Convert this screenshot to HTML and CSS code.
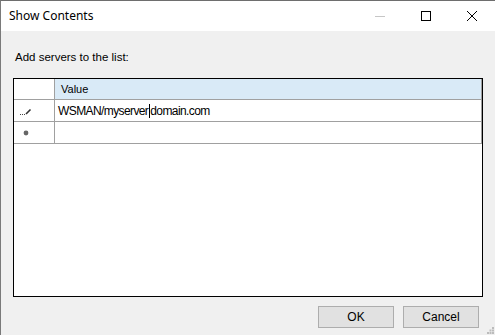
FILE: index.html
```html
<!DOCTYPE html>
<html lang="en">
<head>
    <meta charset="UTF-8">
    <title>Show Contents</title>
    <link rel="stylesheet" href="styles.css">
</head>
<body>
    <div class="window">
        <div class="titlebar">
            <span class="title">Show Contents</span>
            <div class="caption-buttons">
                <div class="cap-btn">
                    <svg width="12" height="12" viewBox="0 0 12 12"><path d="M1 6.5h10" stroke="#c6c6c6" stroke-width="1" fill="none"/></svg>
                </div>
                <div class="cap-btn">
                    <svg width="12" height="12" viewBox="0 0 12 12"><rect x="1.5" y="1.5" width="9" height="9" stroke="#000" stroke-width="1" fill="none"/></svg>
                </div>
                <div class="cap-btn">
                    <svg width="12" height="12" viewBox="0 0 12 12"><path d="M1 1l10 10M11 1L1 11" stroke="#000" stroke-width="1" fill="none"/></svg>
                </div>
            </div>
        </div>
        <div class="content">
            <div class="label">Add servers to the list:</div>
            <div class="grid">
                <div class="row head">
                    <div class="row-header"></div>
                    <div class="cell">Value</div>
                </div>
                <div class="row">
                    <div class="row-header">
                        <span class="row-icon">
                            <svg width="12" height="8" viewBox="0 0 12 8"><path d="M0 7.5h1M2 7.5h1M4 7.5h1" stroke="#444" stroke-width="1"/><path d="M6 7l4.5-4.5" stroke="#333" stroke-width="1.6"/></svg>
                        </span>
                    </div>
                    <div class="cell editing">WSMAN/myserver<span class="caret"></span>domain.com</div>
                </div>
                <div class="row">
                    <div class="row-header">
                        <span class="row-icon">
                            <svg width="6" height="6" viewBox="0 0 6 6"><circle cx="3" cy="3" r="2.4" fill="#666"/></svg>
                        </span>
                    </div>
                    <div class="cell"></div>
                </div>
            </div>
            <div class="actions">
                <button class="btn">OK</button>
                <button class="btn">Cancel</button>
            </div>
        </div>
        <svg class="grip" width="7" height="7" viewBox="0 0 7 7">
            <rect x="5" y="0" width="2" height="2" fill="#bcbcbc"/>
            <rect x="2.5" y="2.5" width="2" height="2" fill="#bcbcbc"/>
            <rect x="5" y="2.5" width="2" height="2" fill="#bcbcbc"/>
            <rect x="0" y="5" width="2" height="2" fill="#bcbcbc"/>
            <rect x="2.5" y="5" width="2" height="2" fill="#bcbcbc"/>
            <rect x="5" y="5" width="2" height="2" fill="#bcbcbc"/>
        </svg>
    </div>
</body>
</html>
```

FILE: styles.css
```css
body {
    margin: 0;
    font-family: 'Liberation Sans', Arial, sans-serif;
    font-size: 11px;
    color: #000;
    background: #f0f0f0;
}
.window {
    position: relative;
    width: 495px;
    height: 335px;
    box-sizing: border-box;
    border-left: 1px solid #7a7a7a;
    border-top: 1px solid #6e6e6e;
    background: #f0f0f0;
    display: flex;
    flex-direction: column;
}
.titlebar {
    height: 30px;
    background: #fff;
    display: flex;
    align-items: center;
    justify-content: space-between;
    flex-shrink: 0;
}
.title {
    font-family: 'Noto Sans', sans-serif;
    font-size: 12px;
    padding-left: 8px;
    padding-bottom: 1px;
}
.caption-buttons {
    display: flex;
    height: 100%;
}
.cap-btn {
    width: 46px;
    height: 100%;
    display: flex;
    align-items: center;
    justify-content: center;
}
.content {
    flex: 1;
    display: flex;
    flex-direction: column;
    padding: 0 12px 0 12px;
}
.label {
    line-height: 14px;
    margin-top: 19px;
    margin-bottom: 14px;
    padding-left: 2px;
    font-size: 11.5px;
}
.grid {
    height: 219px;
    width: 470px;
    box-sizing: border-box;
    border: 1px solid #000;
    background: #fff;
}
.row {
    display: flex;
    height: 21px;
    border-bottom: 1px solid #a0a0a0;
    border-right: 1px solid #a0a0a0;
}
.row.head {
    height: 20px;
}
.row-header {
    width: 40px;
    flex-shrink: 0;
    border-right: 1px solid #a0a0a0;
    display: flex;
    align-items: center;
    background: #fff;
}
.row-icon {
    width: 24px;
    display: flex;
    justify-content: center;
}
.cell {
    flex: 1;
    display: flex;
    align-items: center;
    padding-left: 3px;
    font-size: 11px;
}
.head .cell {
    background: #d9eaf7;
    padding-left: 6px;
}
.cell.editing {
    font-size: 12px;
    letter-spacing: -0.6px;
}
.caret {
    display: inline-block;
    width: 1px;
    height: 14px;
    background: #000;
    margin: 0 0 0 1px;
}
.actions {
    display: flex;
    justify-content: flex-end;
    gap: 9px;
    margin-top: 9px;
    padding-right: 4px;
}
.btn {
    width: 76px;
    height: 22px;
    background: #e1e1e1;
    border: 1px solid #adadad;
    font-family: 'Liberation Sans', Arial, sans-serif;
    font-size: 12px;
    color: #000;
    padding: 0;
}
.grip {
    position: absolute;
    right: 1px;
    bottom: 1px;
}
```
